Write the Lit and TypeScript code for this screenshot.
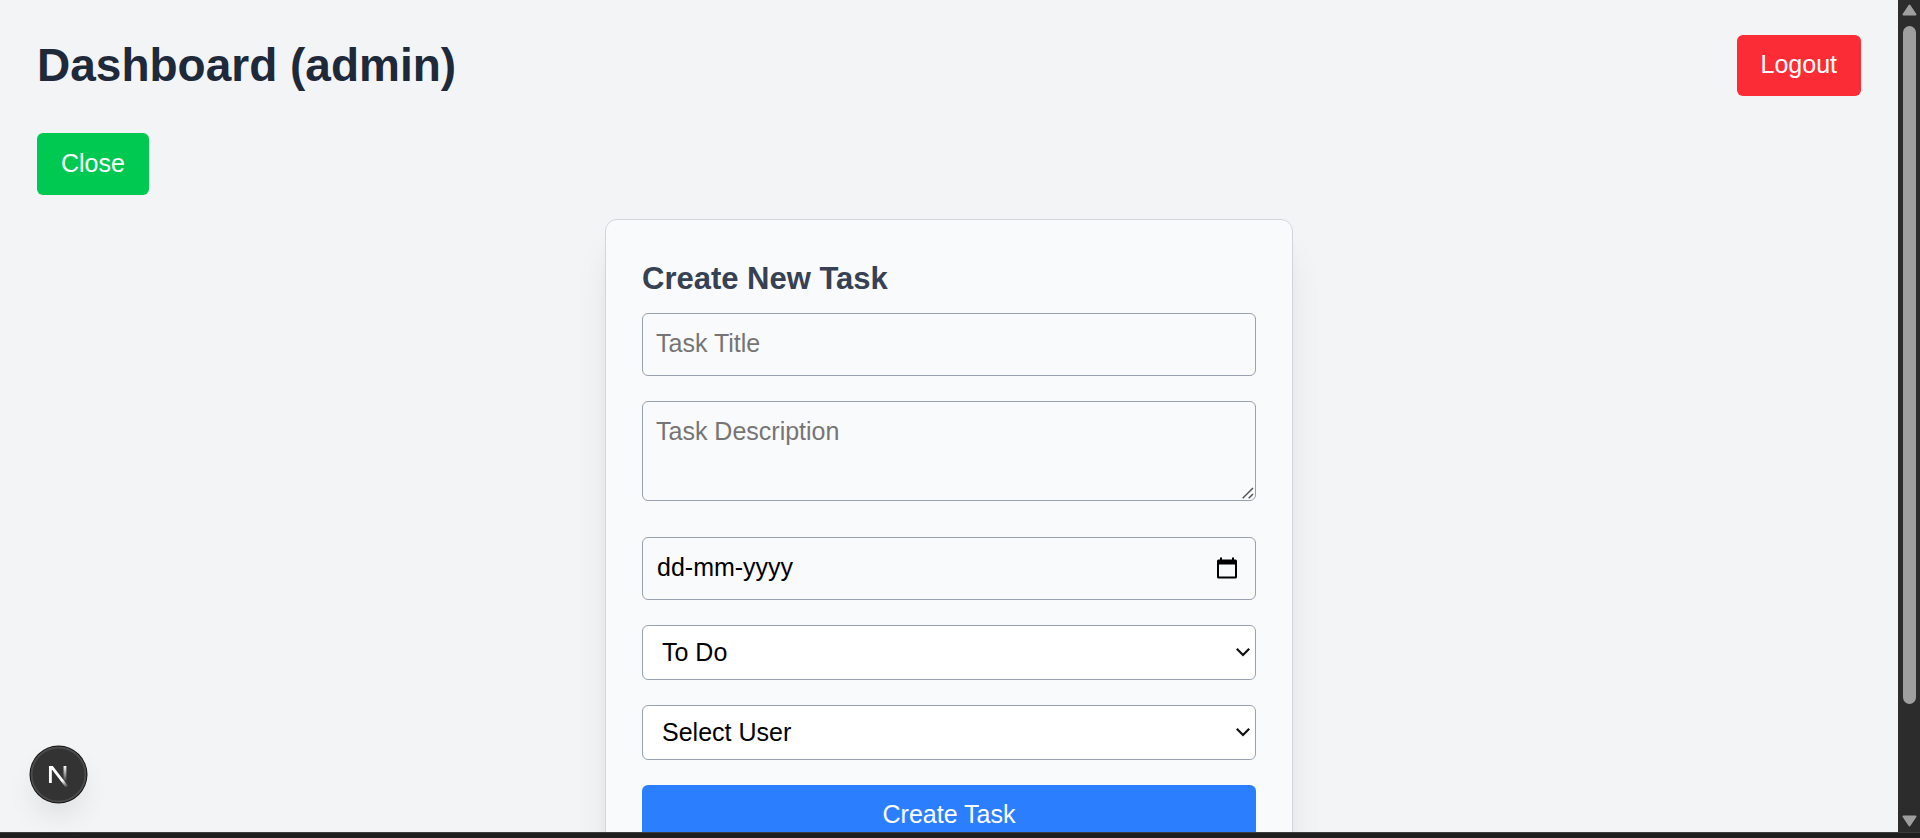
import { LitElement, html, css } from "lit";
import { customElement, state } from "lit/decorators.js";

@customElement("task-form")
class TaskForm extends LitElement {
  static styles = css`
    :host {
      display: block;
      width: 100%;
      max-width: 688px;
      margin: 0 auto;
    }
    .card {
      box-sizing: border-box;
      padding: 36px;
      border: 1px solid #d1d5dc;
      border-radius: 12px;
      background: #f9fafb;
      box-shadow:
        0 31px 38px -8px rgba(0, 0, 0, 0.1),
        0 12px 15px -9px rgba(0, 0, 0, 0.1);
    }
    .heading {
      margin: 0 0 12px;
      font-size: 31px;
      line-height: 45px;
      font-weight: 700;
      color: #364153;
    }
    .fields {
      display: flex;
      flex-direction: column;
      gap: 25px;
    }
    .control {
      display: block;
      box-sizing: border-box;
      width: 100%;
      margin: 0;
      padding: 12px 13px;
      border: 1px solid #99a1af;
      border-radius: 6px;
      background: transparent;
      font-family: inherit;
      font-size: 25px;
      line-height: 35px;
      color: #000;
    }
    input.control {
      height: 63px;
      padding: 12px 13px 14px;
    }
    .control::placeholder {
      color: #757575;
      opacity: 1;
    }
    .area {
      height: 100px;
      resize: vertical;
    }
    .area::-webkit-resizer {
      background: transparent;
    }
    .grip {
      place-self: end;
      margin: 0 2px 2px 0;
      pointer-events: none;
    }
    .wrap {
      display: grid;
      align-items: center;
    }
    .wrap > * {
      grid-area: 1 / 1;
    }
    .notes {
      margin-bottom: 11px;
    }
    input.date {
      padding-left: 14px;
    }
    .date::placeholder {
      color: #000;
    }
    .picker {
      justify-self: end;
      display: flex;
      margin: 0 17px 2px 0;
      padding: 0;
      border: 0;
      background: none;
    }
    .select {
      appearance: none;
      height: 55px;
      padding: 8px 40px 8px 19px;
      background: #fff;
    }
    .chevron {
      justify-self: end;
      margin: 0 5px 2px 0;
      pointer-events: none;
    }
    .submit {
      padding: 11px 24px 13px;
      border: 0;
      border-radius: 6px;
      background: #2b7fff;
      color: #fff;
      font-family: inherit;
      font-size: 25px;
      line-height: 37px;
    }
  `;

  private chevron() {
    return html`<svg class="chevron" width="16" height="10" viewBox="0 0 16 10" fill="none" aria-hidden="true">
      <path d="M1.800 1.800 8 8 14.200 1.800" stroke="#111" stroke-width="2.2" />
    </svg>`;
  }

  render() {
    return html`
      <form class="card" @submit=${(e: Event) => e.preventDefault()}>
        <h2 class="heading">Create New Task</h2>
        <div class="fields">
          <input class="control" type="text" placeholder="Task Title" aria-label="Task Title" />
          <div class="wrap notes">
            <textarea class="control area" placeholder="Task Description" aria-label="Task Description"></textarea>
            <svg class="grip" width="12" height="12" viewBox="0 0 12 12" fill="none" aria-hidden="true">
              <path d="M0.700 11.300 11 1M6.700 11.300 11 7" stroke="#555" stroke-width="1.500" />
            </svg>
          </div>
          <div class="wrap">
            <input class="control date" type="text" placeholder="dd-mm-yyyy" aria-label="Due date" />
            <button class="picker" type="button" aria-label="Open calendar">
              <svg width="24" height="24" viewBox="0 0 24 24" aria-hidden="true">
                <path
                  fill="#000"
                  fill-rule="evenodd"
                  d="M5 1.500h2V3.500h10v-2h2v2h1.500a1.500 1.500 0 0 1 1.500 1.500v16a1.500 1.500 0 0 1-1.500 1.500h-17a1.500 1.500 0 0 1-1.500-1.500v-16a1.500 1.500 0 0 1 1.500-1.500h1.500zM4 8.500v12h16v-12z"
                />
              </svg>
            </button>
          </div>
          <div class="wrap">
            <select class="control select" aria-label="Status">
              <option>To Do</option>
              <option>In Progress</option>
              <option>Done</option>
            </select>
            ${this.chevron()}
          </div>
          <div class="wrap">
            <select class="control select" aria-label="Assignee">
              <option>Select User</option>
            </select>
            ${this.chevron()}
          </div>
          <button class="submit" type="submit">Create Task</button>
        </div>
      </form>
    `;
  }
}

@customElement("app-root")
class AppRoot extends LitElement {
  static styles = css`
    :host {
      display: flex;
      flex-direction: column;
      position: relative;
      height: 100vh;
      overflow: hidden;
      background: #f3f4f6;
      font-family: "Liberation Sans", Arial, sans-serif;
    }
    .window {
      flex: 1;
      min-height: 0;
      display: flex;
    }
    .page {
      flex: 1;
      min-width: 0;
      overflow: hidden;
      box-sizing: border-box;
      padding: 35px 37px;
    }
    .top {
      display: flex;
      align-items: center;
      justify-content: space-between;
      margin-bottom: 37px;
    }
    .title {
      margin: 0;
      padding-bottom: 2px;
      font-size: 46px;
      line-height: 56px;
      font-weight: 700;
      color: #1e2939;
    }
    .button {
      display: block;
      padding: 11px 24px 13px;
      border: 0;
      border-radius: 6px;
      color: #fff;
      font-family: inherit;
      font-size: 25px;
      line-height: 37px;
    }
    .logout {
      background: #fb2c36;
    }
    .toggle {
      margin-bottom: 24px;
      padding: 12px 24px 13px;
      background: #00c951;
    }
    .scrollbar {
      flex: none;
      width: 22px;
      box-sizing: border-box;
      padding: 4px 0 5px;
      display: flex;
      flex-direction: column;
      align-items: center;
      gap: 10px;
      background: #2c2c2c;
    }
    .arrow {
      flex: none;
      display: block;
    }
    .track {
      flex: 1;
      width: 13px;
    }
    .thumb {
      height: 87%;
      border-radius: 7px;
      background: #9f9f9f;
    }
    .edge {
      flex: none;
      height: 5px;
      border-top: 1px solid #3c3c3c;
      background: #1f1f1f;
    }
    .badge {
      position: absolute;
      left: 29px;
      bottom: 34px;
      display: flex;
      padding: 0;
      border: 0;
      border-radius: 50%;
      background: none;
      box-shadow: 0 16px 32px -8px rgba(0, 0, 0, 0.12);
    }
  `;

  @state() private open = true;

  render() {
    return html`
      <div class="window">
        <main class="page">
          <header class="top">
            <h1 class="title">Dashboard (admin)</h1>
            <button class="button logout" type="button">Logout</button>
          </header>
          <button class="button toggle" type="button" @click=${() => (this.open = !this.open)}>
            ${this.open ? "Close" : "Create Task"}
          </button>
          ${this.open ? html`<task-form></task-form>` : null}
        </main>
        <div class="scrollbar" aria-hidden="true">
          <svg class="arrow" width="15" height="12" viewBox="0 0 15 12">
            <path d="M7.500 1.500 13.500 10.500h-12z" fill="#9f9f9f" stroke="#9f9f9f" stroke-width="2" stroke-linejoin="round" />
          </svg>
          <div class="track"><div class="thumb"></div></div>
          <svg class="arrow" width="15" height="12" viewBox="0 0 15 12">
            <path d="M7.500 10.500 13.500 1.500h-12z" fill="#9f9f9f" stroke="#9f9f9f" stroke-width="2" stroke-linejoin="round" />
          </svg>
        </div>
      </div>
      <div class="edge"></div>
      <button class="badge" type="button" aria-label="Open developer tools">
        <svg width="59" height="59" viewBox="0 0 59 59" fill="none" aria-hidden="true">
          <defs>
            <linearGradient id="diagonal" gradientUnits="userSpaceOnUse" x1="9.955" y1="11.12" x2="15.56" y2="18.08">
              <stop stop-color="#fff" />
              <stop offset="0.604" stop-color="#fff" stop-opacity="0" />
              <stop offset="1" stop-color="#fff" stop-opacity="0" />
            </linearGradient>
            <linearGradient id="stem" gradientUnits="userSpaceOnUse" x1="11.82" y1="1.4" x2="11.79" y2="12">
              <stop stop-color="#fff" />
              <stop offset="1" stop-color="#fff" stop-opacity="0" />
            </linearGradient>
            <clipPath id="cap"><rect x="0" y="1.5" width="20" height="20" /></clipPath>
          </defs>
          <circle cx="29.5" cy="29.5" r="29" fill="#111" />
          <circle cx="29.5" cy="29.5" r="27" fill="#333" stroke="#4c4c4c" stroke-width="2" />
          <g transform="translate(17.8 18.7) scale(1.536)">
            <path clip-path="url(#cap)" d="M13.3 15.2 2.34 1V12.600" stroke="url(#diagonal)" stroke-width="1.86" />
            <path d="M11.825 1.500V13.100" stroke="url(#stem)" stroke-width="1.86" />
          </g>
        </svg>
      </button>
    `;
  }
}
